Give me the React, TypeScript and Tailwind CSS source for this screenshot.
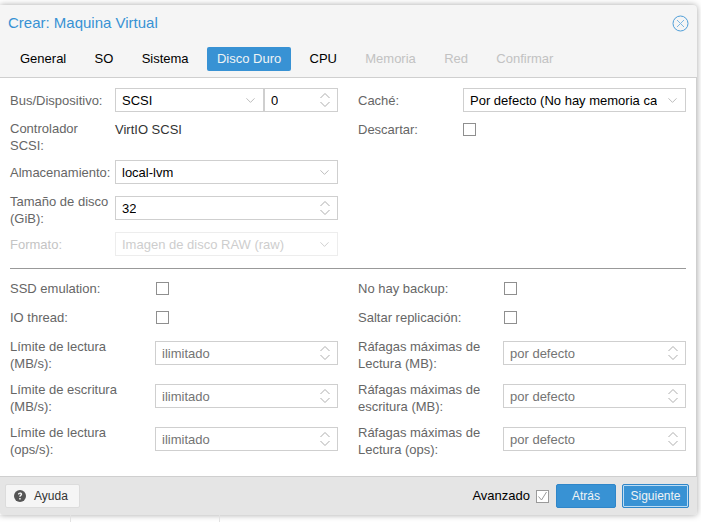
import { ChevronDown } from "lucide-react";

const font = "font-['Liberation_Sans',Arial,sans-serif]";

function Arrow() {
  return <ChevronDown className="h-[15px] w-[15px] text-[#a6a6a6]" strokeWidth={1.2} />;
}

function Spinner() {
  return (
    <svg width="12" height="16" viewBox="0 0 12 16" fill="none" stroke="#aeaeae" strokeWidth="1" className="mr-[1px]">
      <path d="M1.5 6L6 1.5 10.5 6M1.5 10L6 14.5 10.5 10" />
    </svg>
  );
}

function Input({
  value, kind, muted, disabled, className = "w-full",
}: {
  value: string; kind: "select" | "spin"; muted?: boolean; disabled?: boolean; className?: string;
}) {
  return (
    <div
      className={`flex h-6 shrink-0 items-center justify-between border bg-white pl-[6px] pr-[5px] text-[13px] ${
        disabled ? "border-[#e6e6e6] text-[#b9b9b9] opacity-70" : muted ? "border-[#cfcfcf] text-[#747474]" : "border-[#cfcfcf] text-black"
      } ${className}`}
    >
      <span className="truncate whitespace-nowrap pt-px">{value}</span>
      {kind === "select" ? <Arrow /> : <Spinner />}
    </div>
  );
}

function Checkbox() {
  return <span className="block h-[13px] w-[13px] border border-[#8f8f8f] bg-white" />;
}

function Row({
  label, width, disabled, children, className = "", labelClass = "",
}: {
  label: string; width: string; disabled?: boolean; children: React.ReactNode; className?: string; labelClass?: string;
}) {
  return (
    <div className={`flex items-center ${className}`}>
      <div className={`shrink-0 pr-1 leading-[17px] ${disabled ? "text-[#c4c4c4]" : "text-[#666666]"} ${width} ${labelClass}`}>{label}</div>
      <div className="flex min-w-0 flex-1 items-center">{children}</div>
    </div>
  );
}

function Limit({ label, value }: { label: string; value: string }) {
  return (
    <Row label={label} width="w-[145px]" labelClass="pt-[3px]" className="mb-px h-[42px]">
      <Input value={value} kind="spin" muted />
    </Row>
  );
}

function Flag({ label }: { label: string }) {
  return (
    <Row label={label} width="w-[146px]" className="h-[29px]">
      <Checkbox />
    </Row>
  );
}

export default function App() {
  const tabs = [
    { name: "General" },
    { name: "SO" },
    { name: "Sistema" },
    { name: "Disco Duro", active: true },
    { name: "CPU" },
    { name: "Memoria", off: true },
    { name: "Red", off: true },
    { name: "Confirmar", off: true },
  ];

  return (
    <div className={`h-[522px] w-[701px] overflow-hidden bg-white pt-[5px] text-[13px] ${font}`}>
      <div className="flex h-[510px] w-[697px] flex-col rounded-tr-[4px] rounded-br-[3px] bg-[#f5f5f5] shadow-[0_0_6px_rgba(0,0,0,0.35)]">
        <div className="flex h-[36px] items-center justify-between pl-2 pr-[8px] pt-[1px]">
          <span className="text-[15px] text-[#3892d4]">Crear: Maquina Virtual</span>
          <svg width="17" height="17" viewBox="0 0 17 17" fill="none" stroke="#4f9ed8" strokeWidth="1">
            <circle cx="8.5" cy="8.5" r="7.5" />
            <path d="M5 5l7 7M12 5l-7 7" stroke="#7db8e3" />
          </svg>
        </div>
        <div className="flex h-[36px] items-start gap-[8.3px] pl-[10px] pt-[6px]">
          {tabs.map((t) => (
            <div
              key={t.name}
              className={`flex h-6 items-center justify-center rounded-[2px] px-[10px] ${
                t.active ? "bg-[#3892d4] text-[#f0f4f4]" : t.off ? "text-[#c2c2c2]" : "text-black"
              }`}
            >
              {t.name}
            </div>
          ))}
        </div>

        <div className="flex-1 border-y border-r border-[#cfcfcf] bg-white px-[10px] pt-[10px]">
          <div className="grid grid-cols-[328px_328px] gap-x-5">
            <div>
              <Row label="Bus/Dispositivo:" width="w-[105px]" className="h-6">
                <Input value="SCSI" kind="select" className="w-[149px]" />
                <Input value="0" kind="spin" className="w-[74px]" />
              </Row>
              <Row label="Controlador SCSI:" width="w-[105px]" className="mt-[8px] h-[40px] items-start">
                <span className="text-[#333333]">VirtIO SCSI</span>
              </Row>
              <Row label="Almacenamiento:" width="w-[105px]" labelClass="pt-px" className="h-6">
                <Input value="local-lvm" kind="select" />
              </Row>
              <Row label="Tamaño de disco (GiB):" width="w-[105px]" labelClass="pt-[3px]" className="mt-3 h-6">
                <Input value="32" kind="spin" />
              </Row>
              <Row label="Formato:" width="w-[105px]" disabled className="mt-3 h-6">
                <Input value="Imagen de disco RAW (raw)" kind="select" disabled />
              </Row>
            </div>
            <div>
              <Row label="Caché:" width="w-[105px]" className="h-6">
                <Input value="Por defecto (No hay memoria ca" kind="select" />
              </Row>
              <Row label="Descartar:" width="w-[105px]" className="mt-[5px] h-6">
                <Checkbox />
              </Row>
            </div>
          </div>

          <div className="mt-3 h-px w-[676px] bg-[#999999]" />

          <div className="mt-[5px] grid grid-cols-[328px_328px] gap-x-5">
            <div>
              <Flag label="SSD emulation:" />
              <Flag label="IO thread:" />
              <Limit label="Límite de lectura (MB/s):" value="ilimitado" />
              <Limit label="Límite de escritura (MB/s):" value="ilimitado" />
              <Limit label="Límite de lectura (ops/s):" value="ilimitado" />
            </div>
            <div>
              <Flag label="No hay backup:" />
              <Flag label="Saltar replicación:" />
              <Limit label="Ráfagas máximas de Lectura (MB):" value="por defecto" />
              <Limit label="Ráfagas máximas de escritura (MB):" value="por defecto" />
              <Limit label="Ráfagas máximas de Lectura (ops):" value="por defecto" />
            </div>
          </div>
        </div>

        <div className="flex h-[38px] items-center justify-between rounded-b-[3px] bg-[#e5e5e5] pl-[5px] pr-2">
          <button className="flex h-[24px] w-[75px] items-center gap-[7px] rounded-[2px] border border-[#dcdcdc] bg-[#f5f5f5] pl-[7px] text-[12px] text-[#333333]">
            <svg width="14" height="14" viewBox="0 0 14 14">
              <circle cx="7" cy="7" r="6" fill="#555555" />
              <path d="M4.9 5.4c.1-1.2 1-1.9 2.2-1.9s2.1.7 2.1 1.7c0 1.5-1.6 1.4-1.6 2.6H6.2c0-1.8 1.4-1.7 1.4-2.5 0-.4-.2-.6-.6-.6-.5 0-.7.3-.8.8zM6.2 9h1.5v1.4H6.2z" fill="#f5f5f5" />
            </svg>
            Ayuda
          </button>
          <div className="flex items-center">
            <span className="text-black">Avanzado</span>
            <span className="ml-[6px] flex h-[13px] w-[13px] items-center justify-center border border-[#9a9a9a] bg-white">
              <svg width="11" height="11" viewBox="0 0 11 11" fill="none" stroke="#9a9a9a" strokeWidth="1">
                <path d="M1.5 5.5l3 3.5 5-8" />
              </svg>
            </span>
            <button className="ml-[7px] h-6 w-[60px] rounded-[2px] border border-[#2f86c9] bg-[#3892d4] text-[12px] text-[#f0f4f4]">Atrás</button>
            <button className="ml-[6px] flex h-6 w-[67px] items-center justify-center rounded-[2px] border border-[#2f86c9] bg-[#3892d4] text-[12px] text-[#f0f4f4] outline outline-1 -outline-offset-2 outline-[#bcdcf3]">
              Siguiente
            </button>
          </div>
        </div>
      </div>
      <div className="flex h-[7px] pl-[70px]">
        <div className="w-[150px] border-x border-[#e2e2e2]" />
      </div>
    </div>
  );
}
